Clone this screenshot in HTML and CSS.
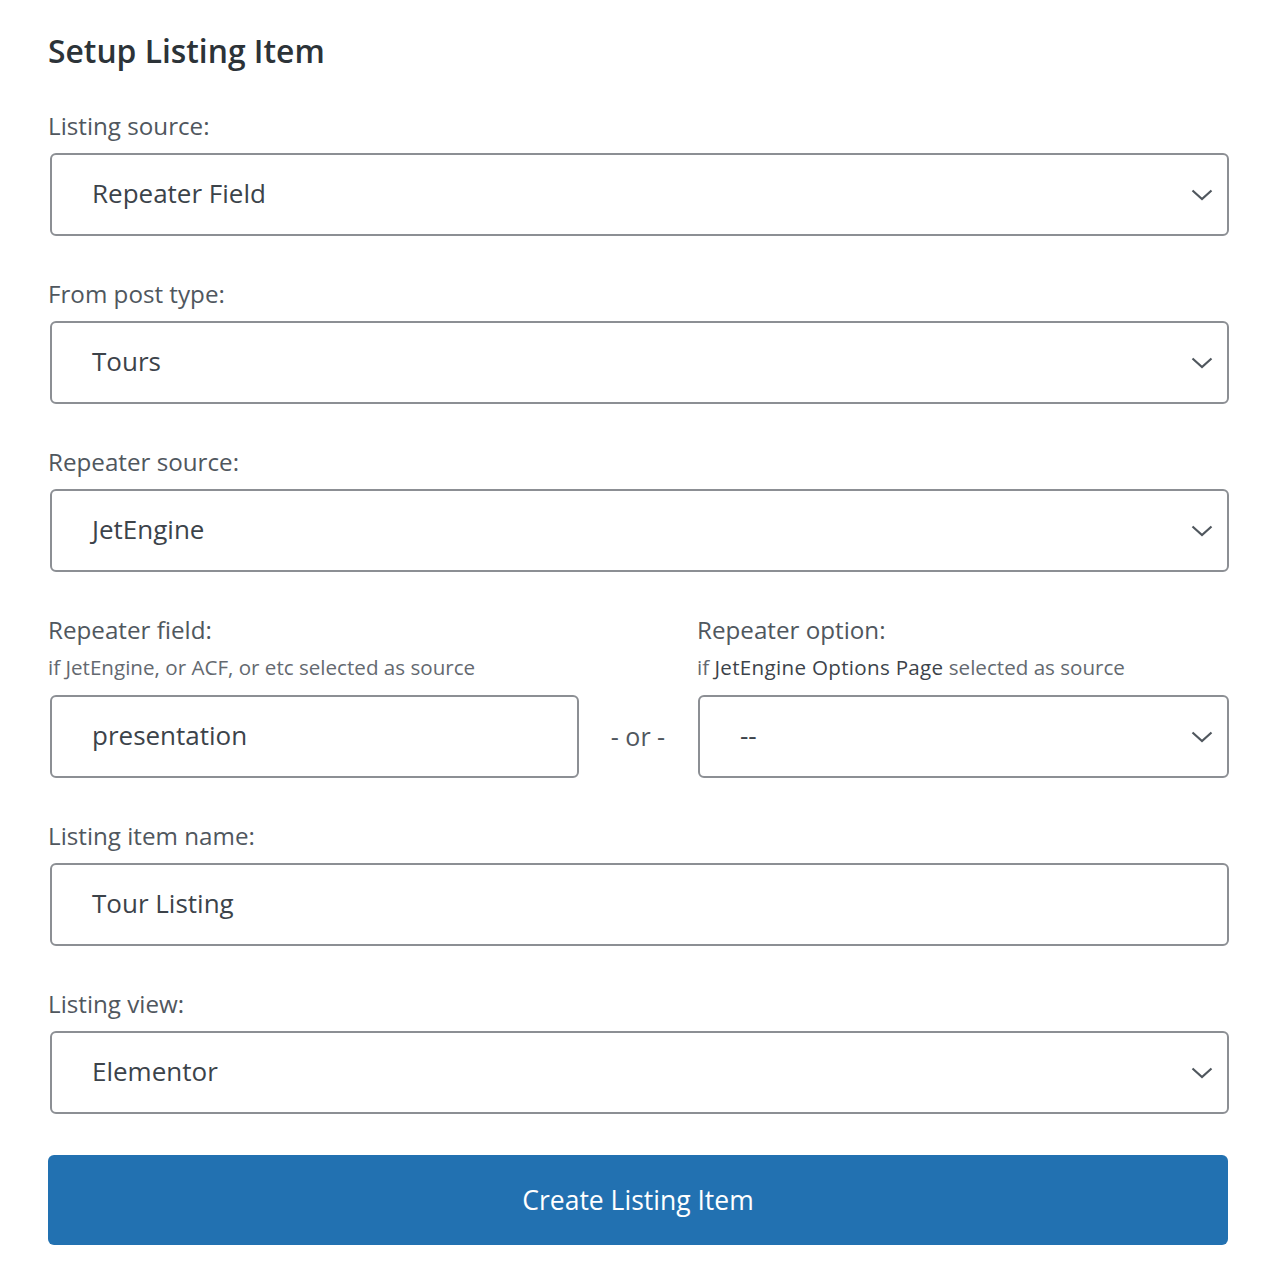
FILE: index.html
```html
<!DOCTYPE html>
<html lang="en">
<head>
<meta charset="utf-8">
<title>Setup Listing Item</title>
<link rel="stylesheet" href="styles.css">
</head>
<body>
<div class="panel">
  <h2 class="title">Setup Listing Item</h2>

  <div class="field">
    <div class="label">Listing source:</div>
    <div class="box">
      <span class="value">Repeater Field</span>
      <svg class="chev" viewBox="0 0 22 12" width="22" height="12"><path d="M1.5 1.5 L11 10 L20.5 1.5" fill="none" stroke="#50575e" stroke-width="2.2"/></svg>
    </div>
  </div>

  <div class="field">
    <div class="label">From post type:</div>
    <div class="box">
      <span class="value">Tours</span>
      <svg class="chev" viewBox="0 0 22 12" width="22" height="12"><path d="M1.5 1.5 L11 10 L20.5 1.5" fill="none" stroke="#50575e" stroke-width="2.2"/></svg>
    </div>
  </div>

  <div class="field">
    <div class="label">Repeater source:</div>
    <div class="box">
      <span class="value">JetEngine</span>
      <svg class="chev" viewBox="0 0 22 12" width="22" height="12"><path d="M1.5 1.5 L11 10 L20.5 1.5" fill="none" stroke="#50575e" stroke-width="2.2"/></svg>
    </div>
  </div>

  <div class="split">
    <div class="col col-left">
      <div class="label">Repeater field:</div>
      <div class="desc">if JetEngine, or ACF, or etc selected as source</div>
      <div class="box">
        <span class="value">presentation</span>
      </div>
    </div>
    <div class="or">- or -</div>
    <div class="col col-right">
      <div class="label">Repeater option:</div>
      <div class="desc">if <span class="desc-strong">JetEngine Options Page</span> selected as source</div>
      <div class="box">
        <span class="value">--</span>
        <svg class="chev" viewBox="0 0 22 12" width="22" height="12"><path d="M1.5 1.5 L11 10 L20.5 1.5" fill="none" stroke="#50575e" stroke-width="2.2"/></svg>
      </div>
    </div>
  </div>

  <div class="field">
    <div class="label">Listing item name:</div>
    <div class="box">
      <span class="value">Tour Listing</span>
    </div>
  </div>

  <div class="field">
    <div class="label">Listing view:</div>
    <div class="box">
      <span class="value">Elementor</span>
      <svg class="chev" viewBox="0 0 22 12" width="22" height="12"><path d="M1.5 1.5 L11 10 L20.5 1.5" fill="none" stroke="#50575e" stroke-width="2.2"/></svg>
    </div>
  </div>

  <button class="btn" type="button">Create Listing Item</button>
</div>
</body>
</html>
```

FILE: styles.css
```css
* { box-sizing: border-box; }

html, body {
  margin: 0;
  padding: 0;
  background: #ffffff;
}

body {
  font-family: "Open Sans", "Noto Sans", "Liberation Sans", sans-serif;
  color: #3c434a;
}

.panel {
  width: 1180px;
  margin-left: 48px;
  padding-top: 31px;
}

.title {
  margin: 0 0 38px 0;
  font-size: 31.8px;
  line-height: 40px;
  font-weight: 600;
  color: #2c3338;
}

.field {
  margin-bottom: 41px;
}

.label {
  font-size: 24.2px;
  line-height: 34px;
  color: #50575e;
  margin-bottom: 10px;
}

.desc {
  font-size: 20.6px;
  line-height: 28px;
  color: #646970;
  margin-top: -4px;
  margin-bottom: 14px;
  white-space: nowrap;
}

.desc-strong {
  color: #3c434a;
  letter-spacing: 0.3px;
}

.box {
  display: flex;
  align-items: center;
  justify-content: space-between;
  height: 83px;
  margin-left: 2px;
  margin-right: -1px;
  padding: 0 14px 3px 40px;
  border: 2px solid #8c8f94;
  border-radius: 6px;
  background: #ffffff;
}

.value {
  font-size: 26px;
  color: #3c434a;
}

.chev {
  display: block;
  flex: none;
  margin-top: 3px;
}

.split {
  display: grid;
  grid-template-columns: 1fr 118px 1fr;
  margin-bottom: 41px;
}

.col-left .box {
  margin-left: 2px;
  margin-right: 0;
}

.col-right .box {
  margin-left: 1px;
  margin-right: -1px;
}

.or {
  align-self: end;
  height: 83px;
  display: flex;
  align-items: center;
  justify-content: center;
  font-size: 25px;
  color: #50575e;
  padding-bottom: 1px;
}

.btn {
  display: block;
  width: 100%;
  height: 90px;
  border: none;
  border-radius: 6px;
  background: #2271b1;
  color: #ffffff;
  font-family: "Open Sans", "Noto Sans", "Liberation Sans", sans-serif;
  font-size: 26.5px;
  font-weight: 400;
  cursor: pointer;
}
```
